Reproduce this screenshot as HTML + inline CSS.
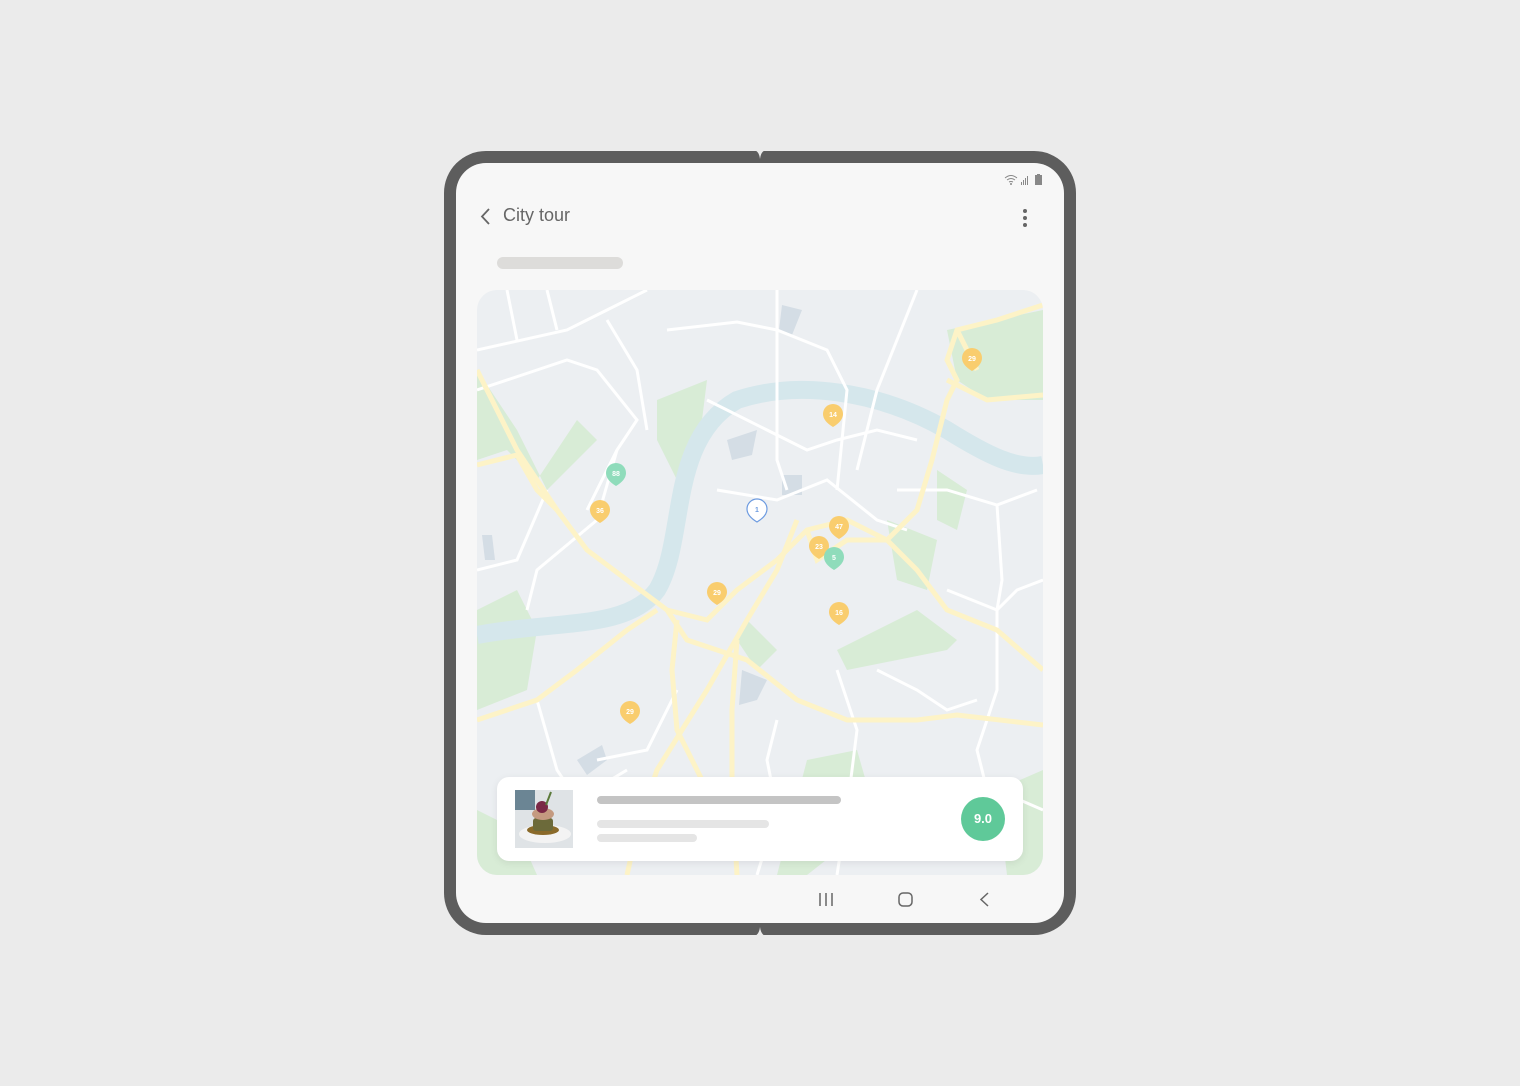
<!DOCTYPE html>
<html><head><meta charset="utf-8"><style>
body{margin:0;width:1520px;height:1086px;background:#ebebeb;font-family:"Liberation Sans",sans-serif;position:relative;overflow:hidden}
.frame{position:absolute;left:444px;top:151px;width:632px;height:784px;background:#5d5d5d;border-radius:42px}
.screen{position:absolute;left:456px;top:163px;width:608px;height:760px;background:#f7f7f7;border-radius:30px;overflow:hidden}
.map{position:absolute;left:21px;top:127px;width:566px;height:585px;border-radius:20px;overflow:hidden;background:#eceff2}
.card{position:absolute;left:41px;top:614px;width:526px;height:84px;background:#fff;border-radius:12px;box-shadow:0 2px 8px rgba(0,0,0,.08)}
.bar{position:absolute;border-radius:4px}
</style></head><body>
<div class="frame"></div>
<svg style="position:absolute;left:754px;top:150px" width="12" height="10"><path d="M0 0 Q5 1 6 9 Q7 1 12 0Z" fill="#ebebeb"/></svg>
<svg style="position:absolute;left:754px;top:926px" width="12" height="10"><path d="M0 10 Q5 9 6 1 Q7 9 12 10Z" fill="#ebebeb"/></svg>
<div class="screen">
 <svg style="position:absolute;left:548px;top:10px" width="40" height="14" viewBox="0 0 40 14">
  <path d="M1 5 Q7 0 13 5 M3 7 Q7 4 11 7 M5 9 Q7 8 9 9" stroke="#888" stroke-width="1" fill="none"/><circle cx="7" cy="11" r="1" fill="#888"/>
  <rect x="17" y="9" width="1" height="3" fill="#888"/><rect x="19" y="7" width="1" height="5" fill="#888"/><rect x="21" y="5" width="1" height="7" fill="#888"/><rect x="23" y="3" width="1" height="9" fill="#888"/>
  <rect x="31" y="2" width="7" height="10" fill="#888"/><rect x="33" y="1" width="3" height="1" fill="#888"/>
 </svg>
 <svg style="position:absolute;left:22px;top:44px" width="14" height="20"><path d="M11 2 L4 9.5 L11 17" stroke="#666" stroke-width="1.8" fill="none"/></svg>
 <div style="position:absolute;left:47px;top:42px;font-size:18px;color:#666">City tour</div>
 <div style="position:absolute;left:567px;top:46px;width:4px;height:4px;border-radius:2px;background:#666;box-shadow:0 7px 0 #666,0 14px 0 #666"></div>
 <div class="bar" style="left:41px;top:94px;width:126px;height:12px;background:#dddcda;border-radius:6px"></div>
 <div class="map">
  <svg width="566" height="585" viewBox="0 0 566 585">
   <g fill="#d8ecd6">
    <path d="M0 80 L40 140 L70 200 L90 180 L120 150 L100 130 L60 190 L30 160 L0 170Z"/>
    <path d="M180 110 L230 90 L220 170 L200 190 L180 150Z"/>
    <path d="M470 40 L566 20 L566 110 L510 110 L480 90Z"/>
    <path d="M410 230 L460 250 L450 300 L420 290Z"/>
    <path d="M360 360 L440 320 L480 350 L470 360 L370 380Z"/>
    <path d="M0 320 L40 300 L60 340 L50 400 L0 420Z"/>
    <path d="M270 330 L300 360 L280 380 L260 350Z"/>
    <path d="M330 470 L380 460 L400 530 L330 585 L300 585Z"/>
    <path d="M520 500 L566 480 L566 585 L530 585Z"/>
    <path d="M0 520 L40 540 L60 585 L0 585Z"/>
    <path d="M460 180 L490 200 L480 240 L460 230Z"/>
   </g>
   <g fill="#d4dde5">
    <path d="M305 15 L325 20 L315 45 L302 40Z"/><path d="M250 150 L280 140 L275 165 L255 170Z"/>
    <path d="M305 185 L325 185 L325 205 L305 205Z"/><path d="M265 380 L290 390 L280 410 L262 415Z"/>
    <path d="M100 470 L125 455 L130 470 L110 485Z"/><path d="M5 245 L15 245 L18 270 L8 270Z"/>
   </g>
   <path d="M0 345 C80 330 150 340 180 300 C210 250 190 150 260 110 C320 90 400 100 470 140 C510 165 540 180 566 175" stroke="#d5e7ec" stroke-width="18" fill="none"/>
   <g stroke="#fff" stroke-width="3" fill="none">
    <path d="M0 60 L90 40 L130 20 L170 0"/><path d="M30 0 L40 50 M70 0 L80 40"/>
    <path d="M0 100 L60 80 L90 70 L120 80 L160 130 L140 160 L110 220"/>
    <path d="M130 30 L160 80 L170 140"/><path d="M190 40 L260 32 L300 40 L350 60 L370 100 L360 200"/>
    <path d="M300 0 L300 170 L310 200"/><path d="M230 110 L290 140 L330 160 L360 150 L400 140 L440 150"/>
    <path d="M440 0 L400 100 L390 140 L380 180"/><path d="M240 200 L300 210 L350 190 L400 230 L430 240"/>
    <path d="M420 200 L470 200 L520 215 L560 200"/><path d="M520 215 L525 290 L520 320 L520 400 L500 460 L510 500"/>
    <path d="M0 280 L40 270 L70 200"/><path d="M140 160 L120 230 L60 280 L50 320"/>
    <path d="M360 380 L380 440 L370 520 L360 585"/><path d="M470 300 L520 320 L540 300 L566 290"/>
    <path d="M400 380 L440 400 L470 420 L500 410"/><path d="M300 430 L290 470 L300 520 L280 585"/>
    <path d="M60 410 L80 480 L100 510 L150 480"/><path d="M120 470 L170 460 L200 400"/>
    <path d="M440 560 L480 520 L520 500 L566 520"/>
   </g>
   <g stroke="#fdf3c7" stroke-width="5" fill="none">
    <path d="M0 80 L20 120 L40 160 L80 220 L110 260 L150 290 L190 320 L230 330 L260 300 L300 270 L330 240 L370 230 L410 250 L440 280 L470 320 L520 340 L566 380"/>
    <path d="M0 175 L40 165 L60 200 L80 220"/>
    <path d="M320 230 L300 280 L270 330 L230 400 L180 480 L160 540 L150 585"/>
    <path d="M190 320 L210 350 L240 360 L270 370 L320 410 L370 430 L440 430 L480 425 L566 435"/>
    <path d="M0 430 L60 410 L100 380 L150 340 L180 320"/>
    <path d="M200 330 L195 380 L200 440 L230 500 L250 560"/>
    <path d="M260 350 L255 420 L255 500 L260 585"/>
    <path d="M410 250 L440 220 L455 170 L470 110 L480 90 L470 70 L480 40 L520 30 L566 15"/>
    <path d="M470 90 L510 110 L566 105"/><path d="M480 40 L500 80"/>
    <path d="M330 240 L340 270 L370 250 L410 250"/>
   </g>
   <g font-family="Liberation Sans" font-size="7" font-weight="bold" fill="#fff" text-anchor="middle">
    <g fill="#f9cd6e"><path d="M485 68 a10 10 0 1 1 20 0 q0 7 -10 13 q-10 -6 -10 -13Z"/><path d="M346 124 a10 10 0 1 1 20 0 q0 7 -10 13 q-10 -6 -10 -13Z"/><path d="M113 220 a10 10 0 1 1 20 0 q0 7 -10 13 q-10 -6 -10 -13Z"/><path d="M352 236 a10 10 0 1 1 20 0 q0 7 -10 13 q-10 -6 -10 -13Z"/><path d="M332 256 a10 10 0 1 1 20 0 q0 7 -10 13 q-10 -6 -10 -13Z"/><path d="M230 302 a10 10 0 1 1 20 0 q0 7 -10 13 q-10 -6 -10 -13Z"/><path d="M352 322 a10 10 0 1 1 20 0 q0 7 -10 13 q-10 -6 -10 -13Z"/><path d="M143 421 a10 10 0 1 1 20 0 q0 7 -10 13 q-10 -6 -10 -13Z"/></g>
    <g fill="#8fdcbb"><path d="M129 183 a10 10 0 1 1 20 0 q0 7 -10 13 q-10 -6 -10 -13Z"/><path d="M347 267 a10 10 0 1 1 20 0 q0 7 -10 13 q-10 -6 -10 -13Z"/></g>
    <path d="M270 219 a10 10 0 1 1 20 0 q0 7 -10 13 q-10 -6 -10 -13Z" fill="#fff" stroke="#6d9be0" stroke-width="1.2"/>
    <text x="495" y="71">29</text><text x="356" y="127">14</text><text x="123" y="223">36</text><text x="362" y="239">47</text><text x="342" y="259">23</text><text x="240" y="305">29</text><text x="362" y="325">16</text><text x="153" y="424">29</text><text x="139" y="186">88</text><text x="357" y="270">5</text><text x="280" y="222" fill="#6d9be0">1</text>
   </g>
  </svg>
 </div>
 <div class="card">
  <svg style="position:absolute;left:18px;top:13px" width="58" height="58" viewBox="0 0 58 58">
   <rect width="58" height="58" fill="#dfe3e6"/><rect width="20" height="20" fill="#6b8594"/>
   <ellipse cx="30" cy="44" rx="26" ry="9" fill="#f3f3f3"/><ellipse cx="28" cy="40" rx="16" ry="5" fill="#8a6a2a"/>
   <rect x="18" y="28" width="20" height="13" rx="3" fill="#6c6a3a"/><ellipse cx="28" cy="24" rx="11" ry="6" fill="#c49a80"/>
   <circle cx="27" cy="17" r="6" fill="#7a2845"/><path d="M31 15 L36 2" stroke="#5b7a3a" stroke-width="2"/>
  </svg>
  <div class="bar" style="left:100px;top:19px;width:244px;height:8px;background:#c4c4c4"></div>
  <div class="bar" style="left:100px;top:43px;width:172px;height:8px;background:#e5e5e5"></div>
  <div class="bar" style="left:100px;top:57px;width:100px;height:8px;background:#e5e5e5"></div>
  <div style="position:absolute;left:464px;top:20px;width:44px;height:44px;border-radius:50%;background:#5fc999;color:#fff;font-size:13px;font-weight:bold;text-align:center;line-height:44px">9.0</div>
 </div>
 <svg style="position:absolute;left:360px;top:727px" width="180" height="20">
  <path d="M4 3 V16 M10 3 V16 M16 3 V16" stroke="#666" stroke-width="1.5"/>
  <rect x="83" y="3" width="13" height="13" rx="4" stroke="#666" stroke-width="1.5" fill="none"/>
  <path d="M172 3 L165 9.5 L172 16" stroke="#666" stroke-width="1.5" fill="none"/>
 </svg>
</div>
</body></html>
